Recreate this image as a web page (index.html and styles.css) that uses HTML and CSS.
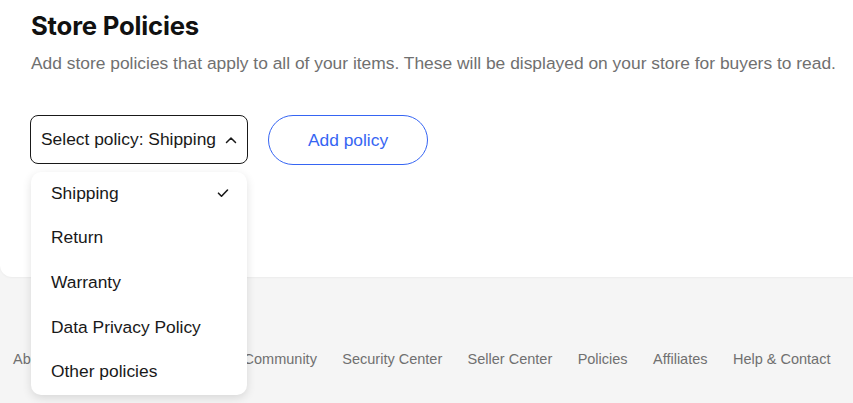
FILE: index.html
```html
<!DOCTYPE html>
<html lang="en">
<head>
<meta charset="utf-8">
<title>Store Policies</title>
<link rel="stylesheet" href="styles.css">
</head>
<body>
<main class="card">
  <h1 class="title">Store Policies</h1>
  <p class="subtitle">Add store policies that apply to all of your items. These will be displayed on your store for buyers to read.</p>
  <div class="actions">
    <div class="select-wrap">
      <button class="select" type="button">
        <span>Select policy: Shipping</span>
        <svg class="chev" width="12" height="8" viewBox="0 0 12 8" aria-hidden="true"><path d="M1.5 6.5L6 2l4.5 4.5" fill="none" stroke="#191919" stroke-width="1.5" stroke-linecap="round" stroke-linejoin="round"/></svg>
      </button>
      <ul class="menu">
        <li class="item">Shipping
          <svg class="check" width="12" height="10" viewBox="0 0 12 10" aria-hidden="true"><path d="M1.5 5.2l3 3L10.5 2" fill="none" stroke="#191919" stroke-width="1.6" stroke-linecap="round" stroke-linejoin="round"/></svg>
        </li>
        <li class="item">Return</li>
        <li class="item">Warranty</li>
        <li class="item">Data Privacy Policy</li>
        <li class="item">Other policies</li>
      </ul>
    </div>
    <button class="add" type="button">Add policy</button>
  </div>
</main>
<footer class="footer">
  <nav class="links">
    <a>About eBay</a>
    <a>Announcements</a>
    <a>Community</a>
    <a>Security Center</a>
    <a>Seller Center</a>
    <a>Policies</a>
    <a>Affiliates</a>
    <a>Help &amp; Contact</a>
  </nav>
</footer>
</body>
</html>
```

FILE: styles.css
```css
* { box-sizing: border-box; }
html, body {
  margin: 0;
  padding: 0;
  background: #f5f5f5;
  font-family: "Liberation Sans", Arial, sans-serif;
  color: #191919;
}
.card {
  background: #fff;
  height: 277px;
  padding: 10px 0 0 31px;
  border-bottom-left-radius: 12px;
  box-shadow: 0 1px 2px rgba(0,0,0,0.04);
}
.title {
  margin: 0;
  font-family: Inter, "Liberation Sans", sans-serif;
  font-weight: 700;
  font-size: 25.7px;
  line-height: 32px;
  letter-spacing: -0.2px;
  color: #111;
}
.subtitle {
  margin: 10px 0 0;
  font-size: 17.4px;
  line-height: 22px;
  color: #707070;
  white-space: nowrap;
}
.actions {
  display: flex;
  gap: 20px;
  margin-top: 41px;
  margin-left: -1px;
}
.select-wrap { position: relative; }
.select {
  display: flex;
  align-items: center;
  justify-content: space-between;
  height: 49px;
  padding: 0 10px 0 10px;
  border: 1px solid #191919;
  border-radius: 8px;
  background: #fff;
  font-family: "Liberation Sans", Arial, sans-serif;
  font-size: 17.4px;
  color: #191919;
  width: 218px;
}
.add {
  height: 50px;
  width: 160px;
  border: 1px solid #3665f3;
  border-radius: 25px;
  background: #fff;
  color: #3665f3;
  font-family: "Liberation Sans", Arial, sans-serif;
  font-size: 17.4px;
}
.menu {
  position: absolute;
  top: 57px;
  left: 1px;
  width: 216px;
  margin: 0;
  padding: 0;
  list-style: none;
  background: #fff;
  border-radius: 10px;
  box-shadow: 0 3px 10px rgba(0,0,0,0.12);
  z-index: 2;
}
.item {
  display: flex;
  align-items: center;
  justify-content: space-between;
  height: 44.6px;
  padding: 0 18px 2px 20px;
  font-size: 17.4px;
  color: #191919;
}
.footer {
  padding-top: 74px;
  height: 126px;
}
.links {
  display: flex;
  gap: 25.4px;
  padding-left: 13px;
  font-size: 14.5px;
  color: #707070;
  white-space: nowrap;
}
```
